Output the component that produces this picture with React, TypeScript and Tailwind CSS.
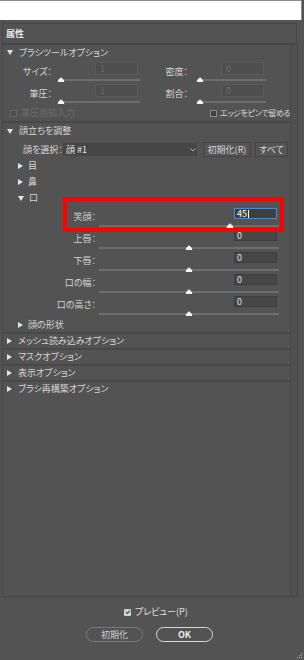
import React from 'react';

function Caret({ open }: { open?: boolean }) {
  return open ? (
    <svg width="6" height="5" viewBox="0 0 6 5" className="shrink-0">
      <path d="M0 0H6L3 5Z" fill="#e4e4e4" />
    </svg>
  ) : (
    <svg width="5" height="6" viewBox="0 0 5 6" className="shrink-0">
      <path d="M0 0L5 3L0 6Z" fill="#e4e4e4" />
    </svg>
  );
}

function Track({ pct, cls }: { pct: number; cls: string }) {
  return (
    <div className={`relative h-[6px] ${cls}`}>
      <div className="absolute inset-x-0 top-[2px] h-[2px] bg-[#6e6e6e]" />
      <svg
        width="7"
        height="5"
        viewBox="0 0 7 5"
        className="absolute top-0 -translate-x-1/2"
        style={{ left: `${pct}%` }}
      >
        <path d="M3.5 0.3L6.7 3.2V5H0.3V3.2Z" fill="#f2f2f2" />
      </svg>
    </div>
  );
}

function BrushField({
  label,
  value,
  pct,
  labelCls,
  trackCls,
}: {
  label: string;
  value: string;
  pct: number;
  labelCls: string;
  trackCls: string;
}) {
  return (
    <div className="flex">
      <div className={`${labelCls} pt-[6px] text-right whitespace-nowrap`}>{label}</div>
      <div className={`${trackCls} flex flex-col`}>
        <div className="mt-[1px] mr-[2px] self-end w-[43px] h-[13px] border border-[#5b5b5b] bg-[#4e4e4e] pl-[4px] leading-[11px] text-[#6c6c6c]">
          {value}
        </div>
        <Track pct={pct} cls="mt-[2px]" />
      </div>
    </div>
  );
}

function MouthField({
  label,
  value,
  pct,
  first,
}: {
  label: string;
  value: string;
  pct: number;
  first?: boolean;
}) {
  return (
    <div className={first ? 'relative flex h-[23px] pt-[1px]' : 'flex h-[22px]'}>
      <div className="w-[93px] pt-[5px] text-right whitespace-nowrap">{label}</div>
      <div className="ml-[3px] w-[180px] flex flex-col">
        <div
          className={
            first
              ? 'mt-[1px] mr-[2px] self-end w-[43px] h-[11px] border border-[#4a8ad0] bg-[#3f3f3f] pl-[2px] leading-[9px] text-white flex items-center'
              : 'mt-[1px] mr-[2px] self-end w-[43px] h-[11px] border border-[#3d3d3d] bg-[#474747] pl-[2px] leading-[9px] text-[#dfe4f0]'
          }
        >
          {value}
          {first && <span className="ml-[1px] w-[1px] h-[8px] bg-white" />}
        </div>
        <Track pct={pct} cls="mt-[4px]" />
      </div>
      {first && (
        <div className="absolute left-[60px] top-[-9px] w-[221px] h-[35px] border-4 border-[#ff0000] pointer-events-none" />
      )}
    </div>
  );
}

function SubRow({ label, open }: { label: string; open?: boolean }) {
  return (
    <div className="flex h-[16px] items-center gap-[5px] pl-[15px]">
      <Caret open={open} />
      <span>{label}</span>
    </div>
  );
}

function SectionHead({ label, open, cls }: { label: string; open?: boolean; cls: string }) {
  return (
    <div className={`flex items-center gap-[6px] pl-[4px] whitespace-nowrap ${cls}`}>
      <Caret open={open} />
      <span>{label}</span>
    </div>
  );
}

export default function App() {
  return (
    <div className="relative w-[304px] h-[660px] overflow-hidden bg-[#535353] text-[9px] leading-[10px] text-[#d6d6d6] font-['Noto_Sans_CJK_JP',sans-serif] [font-feature-settings:'palt']">
      {/* window top strip */}
      <div className="w-[302px] h-[20px] bg-white border-t border-r border-[#8c8c8c]" />

      {/* panel title */}
      <div className="mt-[3px] ml-[2px] w-[295px] h-[21px] border border-[#474747] flex items-center pl-[3px] text-[#e6e6e6] font-bold">
        属性
      </div>

      {/* scroll area */}
      <div className="ml-[2px] w-[296px] h-[553px] border border-[#474747] flex">
        <div className="w-[287px] flex flex-col">
          {/* brush tool options */}
          <div className="border-b-2 border-[#484848]">
            <SectionHead label="ブラシツールオプション" open cls="h-[15px]" />
            <div className="pt-[1px]">
              <div className="flex">
                <BrushField label="サイズ：" value="1" pct={4} labelCls="w-[49px]" trackCls="ml-[6px] w-[82px]" />
                <BrushField label="密度：" value="0" pct={5} labelCls="w-[48px]" trackCls="ml-[9px] w-[69px]" />
              </div>
              <div className="flex">
                <BrushField label="筆圧：" value="1" pct={4} labelCls="w-[49px]" trackCls="ml-[6px] w-[82px]" />
                <BrushField label="割合：" value="0" pct={5} labelCls="w-[48px]" trackCls="ml-[9px] w-[69px]" />
              </div>
            </div>
            <div className="flex h-[16px] items-center whitespace-nowrap">
              <div className="ml-[7px] w-[7px] h-[7px] shrink-0 border border-[#666] bg-[#4d4d4d]" />
              <span className="ml-[4px] w-[50px] shrink-0 text-[#6c6c6c]">筆圧感知入力</span>
              <div className="ml-[139px] w-[7px] h-[7px] shrink-0 border border-[#8a8a8a] bg-[#3f3f3f]" />
              <span className="ml-[3px] text-[8px] tracking-[-0.4px]">エッジをピンで留める</span>
            </div>
          </div>

          {/* face-aware adjustments */}
          <div className="border-b-2 border-[#484848]">
            <SectionHead label="顔立ちを調整" open cls="h-[16px]" />
            <div className="mt-[3px] flex h-[15px] items-center pl-[20px] whitespace-nowrap">
              <div className="w-[40px] shrink-0">顔を選択：</div>
              <div className="w-[134px] h-[13px] shrink-0 bg-[#464646] flex items-center justify-between pl-[3px] pr-[1px]">
                <span className="text-[#e2e2e2]">顔 #1</span>
                <svg width="6" height="4" viewBox="0 0 6 4">
                  <path d="M0.5 0.5L3 3L5.5 0.5" stroke="#bdbdbd" strokeWidth="0.9" fill="none" />
                </svg>
              </div>
              <div className="ml-[6px] w-[48px] h-[15px] shrink-0 border border-[#434343] bg-[#555555] flex items-center justify-center">
                初期化(R)
              </div>
              <div className="ml-[4px] w-[33px] h-[15px] shrink-0 border border-[#434343] bg-[#555555] flex items-center justify-center">
                すべて
              </div>
            </div>
            <div className="mt-[1px]">
              <SubRow label="目" />
              <SubRow label="鼻" />
              <SubRow label="口" open />
            </div>
            <MouthField label="笑顔：" value="45" pct={72.5} first />
            <MouthField label="上唇：" value="0" pct={50} />
            <MouthField label="下唇：" value="0" pct={50} />
            <MouthField label="口の幅：" value="0" pct={50} />
            <MouthField label="口の高さ：" value="0" pct={50} />
            <div className="flex h-[15px] items-center gap-[5px] pl-[15px]">
              <Caret />
              <span>顔の形状</span>
            </div>
          </div>

          <div className="border-b-2 border-[#484848]">
            <SectionHead label="メッシュ読み込みオプション" cls="h-[14px]" />
          </div>
          <div className="border-b-2 border-[#484848]">
            <SectionHead label="マスクオプション" cls="h-[14px]" />
          </div>
          <div className="border-b-2 border-[#484848]">
            <SectionHead label="表示オプション" cls="h-[14px]" />
          </div>
          <div className="flex-1">
            <SectionHead label="ブラシ再構築オプション" cls="h-[14px]" />
          </div>
        </div>
        {/* scrollbar track */}
        <div className="flex-1 border-l border-[#484848] bg-[#505050]" />
      </div>

      {/* preview */}
      <div className="mt-[10px] ml-[124px] flex h-[10px] items-center">
        <div className="w-[7px] h-[7px] rounded-[1px] bg-[#d2d2d2] flex items-center justify-center">
          <svg width="6" height="6" viewBox="0 0 6 6">
            <path d="M1 3.2L2.4 4.5L5 1.5" stroke="#3a3a3a" strokeWidth="1.1" fill="none" />
          </svg>
        </div>
        <span className="ml-[4px] text-[#e0e0e0]">プレビュー(P)</span>
      </div>

      {/* buttons */}
      <div className="mt-[10px] ml-[86px] flex gap-[13px]">
        <div className="w-[57px] h-[15px] rounded-full border-[1.5px] border-[#7a7a7a] flex items-center justify-center text-[#cfcfcf]">
          初期化
        </div>
        <div className="w-[57px] h-[15px] rounded-full border-[1.5px] border-[#d8d8d8] flex items-center justify-center text-[#ececec] font-bold">
          OK
        </div>
      </div>

      {/* resize grip */}
      <svg width="7" height="7" viewBox="0 0 7 7" className="absolute right-[1px] bottom-[1px]">
        <rect x="5" y="1" width="1.2" height="1.2" fill="#9a9a9a" />
        <rect x="3" y="3" width="1.2" height="1.2" fill="#9a9a9a" />
        <rect x="5" y="3" width="1.2" height="1.2" fill="#9a9a9a" />
        <rect x="1" y="5" width="1.2" height="1.2" fill="#9a9a9a" />
        <rect x="3" y="5" width="1.2" height="1.2" fill="#9a9a9a" />
        <rect x="5" y="5" width="1.2" height="1.2" fill="#9a9a9a" />
      </svg>
    </div>
  );
}
